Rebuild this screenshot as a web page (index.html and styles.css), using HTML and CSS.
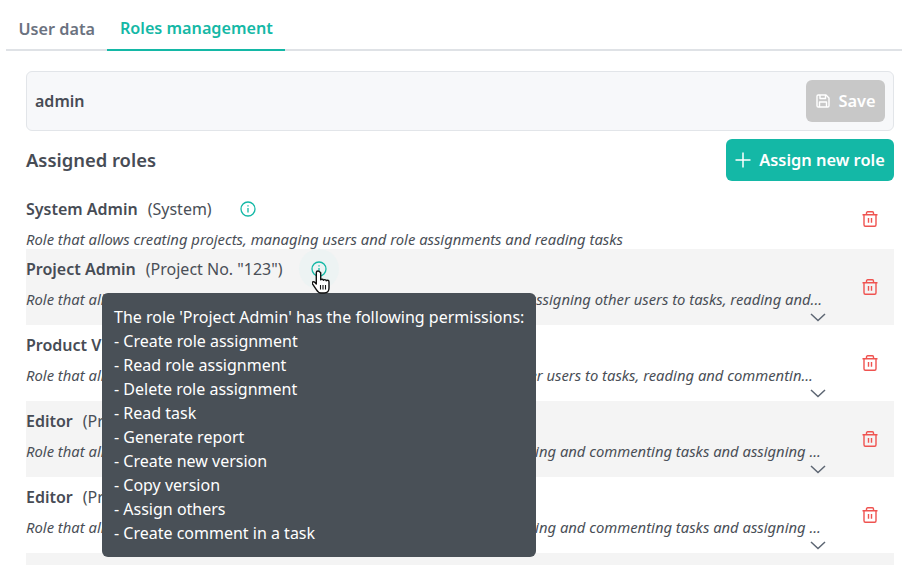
FILE: index.html
```html
<!DOCTYPE html>
<html lang="en">
<head>
<meta charset="utf-8">
<title>Roles management</title>
<link rel="stylesheet" href="styles.css">
</head>
<body>
<div class="page">
  <nav class="tabs">
    <a class="tab">User data</a>
    <a class="tab active">Roles management</a>
  </nav>
  <main class="content">
    <div class="user-panel">
      <span class="user-name">admin</span>
      <button class="btn btn-save">
        <svg class="btn-icon-save" viewBox="0 0 16 16" fill="none" stroke="currentColor" stroke-width="1.400" stroke-linejoin="round"><path d="M2 3.200C2 2.500 2.500 2 3.200 2H11l3 3v7.800c0 .7-.5 1.200-1.200 1.200H3.200C2.500 14 2 13.500 2 12.800Z"/><path d="M5 2v3.500h5.500V2M4.500 14V9h7v5"/></svg>
        Save
      </button>
    </div>
    <div class="section-head">
      <h2 class="section-title">Assigned roles</h2>
      <button class="btn btn-assign">
        <svg class="btn-icon-plus" viewBox="0 0 16 16" fill="none" stroke="currentColor" stroke-width="1.500"><path d="M8 0.500v15M0.500 8h15"/></svg>
        Assign new role
      </button>
    </div>
    <ul class="roles">
      <li class="role role-first">
        <div class="role-main">
          <div class="role-head"><b class="role-name">System Admin</b><span class="role-scope">(System)</span>
            <svg class="info info-first" viewBox="0 0 16 16" fill="none" stroke="currentColor" stroke-width="1.300"><circle cx="8" cy="8" r="7"/><path d="M8 7v4.500M8 4.300v1.300"/></svg>
          </div>
          <p class="role-desc">Role that allows creating projects, managing users and role assignments and reading tasks</p>
        </div>
        <svg class="trash" viewBox="0 0 16 16" fill="none" stroke="currentColor" stroke-width="1.400" stroke-linejoin="round"><path d="M.5 3.700h15M2 3.700v10c0 .8.500 1.500 1.300 1.500h9.400c.8 0 1.300-.7 1.300-1.500v-10M4.500 3.700V2c0-.7.500-1.200 1.100-1.200h4.800c.6 0 1.100.5 1.100 1.200v1.700M6.500 7v4.800M9.500 7v4.800"/></svg>
      </li>
      <li class="role alt">
        <div class="role-main">
          <div class="role-head"><b class="role-name">Project Admin</b><span class="role-scope">(Project No. "123")</span>
            <span class="info-halo"><svg class="info" viewBox="0 0 16 16" fill="none" stroke="currentColor" stroke-width="1.300"><circle cx="8" cy="8" r="7"/><path d="M8 7v4.500M8 4.300v1.300"/></svg></span>
          </div>
          <p class="role-desc">Role that allows creating and reading user assignments, generating reports, assigning other users to tasks, reading and...</p>
          <svg class="chev" viewBox="0 0 16 9" fill="none" stroke="currentColor" stroke-width="1.500"><path d="M1 1l7 6.500L15 1"/></svg>
        </div>
        <svg class="trash" viewBox="0 0 16 16" fill="none" stroke="currentColor" stroke-width="1.400" stroke-linejoin="round"><path d="M.5 3.700h15M2 3.700v10c0 .8.500 1.500 1.300 1.500h9.400c.8 0 1.300-.7 1.300-1.500v-10M4.500 3.700V2c0-.7.500-1.200 1.100-1.200h4.800c.6 0 1.100.5 1.100 1.200v1.700M6.500 7v4.800M9.500 7v4.800"/></svg>
      </li>
      <li class="role">
        <div class="role-main">
          <div class="role-head"><b class="role-name">Product Viewer</b><span class="role-scope">(Project No. "123")</span></div>
          <p class="role-desc">Role that allows reading user assignments, generating reports, assigning other users to tasks, reading and commentin...</p>
          <svg class="chev" viewBox="0 0 16 9" fill="none" stroke="currentColor" stroke-width="1.500"><path d="M1 1l7 6.500L15 1"/></svg>
        </div>
        <svg class="trash" viewBox="0 0 16 16" fill="none" stroke="currentColor" stroke-width="1.400" stroke-linejoin="round"><path d="M.5 3.700h15M2 3.700v10c0 .8.500 1.500 1.300 1.500h9.400c.8 0 1.300-.7 1.300-1.500v-10M4.500 3.700V2c0-.7.500-1.200 1.100-1.200h4.800c.6 0 1.100.5 1.100 1.200v1.700M6.500 7v4.800M9.500 7v4.800"/></svg>
      </li>
      <li class="role alt">
        <div class="role-main">
          <div class="role-head"><b class="role-name">Editor</b><span class="role-scope">(Project No. "123")</span></div>
          <p class="role-desc">Role that allows generating reports, creating a version, copying versions, reading and commenting tasks and assigning ...</p>
          <svg class="chev" viewBox="0 0 16 9" fill="none" stroke="currentColor" stroke-width="1.500"><path d="M1 1l7 6.500L15 1"/></svg>
        </div>
        <svg class="trash" viewBox="0 0 16 16" fill="none" stroke="currentColor" stroke-width="1.400" stroke-linejoin="round"><path d="M.5 3.700h15M2 3.700v10c0 .8.500 1.500 1.300 1.500h9.400c.8 0 1.300-.7 1.300-1.500v-10M4.500 3.700V2c0-.7.500-1.200 1.100-1.200h4.800c.6 0 1.100.5 1.100 1.200v1.700M6.500 7v4.800M9.500 7v4.800"/></svg>
      </li>
      <li class="role">
        <div class="role-main">
          <div class="role-head"><b class="role-name">Editor</b><span class="role-scope">(Project No. "456")</span></div>
          <p class="role-desc">Role that allows generating reports, creating a version, copying versions, reading and commenting tasks and assigning ...</p>
          <svg class="chev" viewBox="0 0 16 9" fill="none" stroke="currentColor" stroke-width="1.500"><path d="M1 1l7 6.500L15 1"/></svg>
        </div>
        <svg class="trash" viewBox="0 0 16 16" fill="none" stroke="currentColor" stroke-width="1.400" stroke-linejoin="round"><path d="M.5 3.700h15M2 3.700v10c0 .8.500 1.500 1.300 1.500h9.400c.8 0 1.300-.7 1.300-1.500v-10M4.500 3.700V2c0-.7.500-1.200 1.100-1.200h4.800c.6 0 1.100.5 1.100 1.200v1.700M6.500 7v4.800M9.500 7v4.800"/></svg>
      </li>
      <li class="role alt"></li>
    </ul>
  </main>
  <div class="tooltip">
    <div>The role 'Project Admin' has the following permissions:</div>
    <div>- Create role assignment</div>
    <div>- Read role assignment</div>
    <div>- Delete role assignment</div>
    <div>- Read task</div>
    <div>- Generate report</div>
    <div>- Create new version</div>
    <div>- Copy version</div>
    <div>- Assign others</div>
    <div>- Create comment in a task</div>
  </div>
  <svg class="cursor" viewBox="0 0 18 24"><path d="M6 1c-1 0-1.700.7-1.700 1.700V14L3 12.500c-1-1-2.300-1-2.700-.1-.3.700 0 1.300.5 2l3.700 5.500c1 1.700 2.300 3.100 4.500 3.100h3.200c2.800 0 4.800-2 4.800-5v-6.200c0-1-.7-1.600-1.500-1.600-.5 0-1 .2-1.200.6-.2-.8-.8-1.200-1.500-1.200-.6 0-1.100.3-1.300.7-.3-.7-.8-1-1.500-1-.5 0-1 .2-1.300.5V2.700C7.700 1.700 7 1 6 1Z" fill="#fff" stroke="#111" stroke-width="1.400" stroke-linejoin="round"/><path d="M8.500 15v4.500M11 15v4.500M13.500 15v4.500" stroke="#111" stroke-width="1.100"/></svg>
</div>
</body>
</html>
```
FILE: styles.css
```css
* { box-sizing: border-box; }
html, body { margin: 0; padding: 0; }
body {
  width: 902px;
  height: 565px;
  overflow: hidden;
  background: #fff;
  font-family: "Noto Sans", sans-serif;
  color: #4a4f57;
}
.page { position: relative; width: 902px; height: 565px; overflow: hidden; }
.tabs {
  display: flex;
  height: 51px;
  margin-left: 6px;
  border-bottom: 2px solid #dfe2e6;
}
.tab {
  display: flex;
  align-items: center;
  height: 51px;
  padding: 17px 12.500px 11px;
  font-size: 16.200px;
  font-weight: 600;
  color: #6b7280;
}
.tab.active {
  color: #14b8a6;
  border-bottom: 2px solid #14b8a6;
}
.content { padding: 20px 8px 0 26px; }
.user-panel {
  display: flex;
  align-items: center;
  justify-content: space-between;
  height: 60px;
  padding: 0 8px;
  background: #f7f8fa;
  border: 1px solid #e2e5e9;
  border-radius: 6px;
}
.user-name { font-size: 16px; font-weight: 600; color: #474c55; }
.btn {
  display: flex;
  align-items: center;
  justify-content: center;
  height: 42px;
  padding: 0 0 2px;
  border: 0;
  border-radius: 6px;
  font-family: inherit;
  font-size: 16.400px;
  font-weight: 600;
  color: #fff;
}
.btn-save { width: 79px; gap: 7px; background: #c8c8c8; }
.btn-icon-save { width: 16px; height: 16px; margin-top: 2px; }
.section-head {
  display: flex;
  align-items: center;
  justify-content: space-between;
  height: 42px;
  margin-top: 8px;
}
.section-title { margin: 0 0 2px; font-size: 18.400px; font-weight: 600; color: #474c55; }
.btn-assign { width: 168px; gap: 8px; background: #14b8a6; }
.btn-icon-plus { width: 16px; height: 16px; margin-top: 2px; }
.roles { margin: 12px 0 0; padding: 0; list-style: none; }
.role {
  position: relative;
  display: flex;
  height: 76px;
}
.role-first { height: 56px; }
.role.alt { background: #f4f4f4; }
.role-main { position: relative; flex: 1; min-width: 0; }
.role-head {
  display: flex;
  align-items: center;
  height: 24px;
  margin-top: 8px;
  font-size: 16px;
}
.role-first .role-head { margin-top: 4px; }
.role-name { font-weight: 600; color: #474c55; }
.role-scope { margin-left: 10px; }
.info { width: 16px; height: 16px; color: #14b8a6; }
.info-first { margin-left: 28px; }
.info-halo {
  display: flex;
  flex: none;
  align-items: center;
  justify-content: center;
  width: 40px;
  height: 40px;
  margin-left: 16px;
  border-radius: 50%;
  background: #edf3f3;
}
.role-desc {
  margin: 8px 0 0;
  font-size: 14.800px;
  line-height: 20px;
  font-style: italic;
  white-space: nowrap;
}
.chev {
  display: block;
  position: absolute;
  left: 784px;
  top: 64px;
  width: 16px;
  height: 9px;
  color: #5d6673;
}
.trash {
  flex: none;
  width: 16px;
  height: 16px;
  margin: 30px 16px 0;
  color: #ef5350;
}
.role-first .trash { margin-top: 18px; }
.tooltip {
  position: absolute;
  left: 102px;
  top: 293px;
  width: 434px;
  height: 264px;
  padding: 12px;
  background: #495057;
  border-radius: 6px;
  color: #fff;
  font-size: 16px;
  line-height: 24px;
  white-space: nowrap;
}
.cursor {
  position: absolute;
  left: 312px;
  top: 270px;
  width: 18px;
  height: 24px;
}
```
